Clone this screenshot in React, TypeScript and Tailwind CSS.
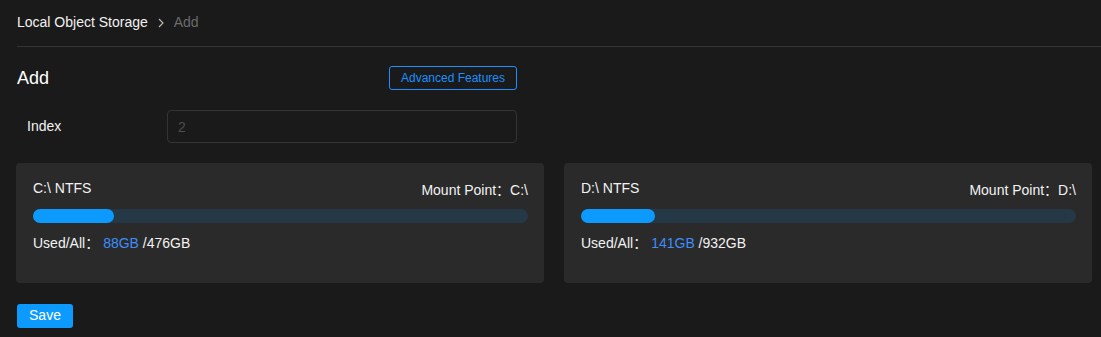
const disks = [
  { name: "C:\\ NTFS", mount: "C:\\", used: "88GB", all: "476GB", pct: 16.4 },
  { name: "D:\\ NTFS", mount: "D:\\", used: "141GB", all: "932GB", pct: 15 },
];

function DiskCard({ disk }: { disk: (typeof disks)[number] }) {
  return (
    <div className="h-[120px] rounded bg-[#2a2a2a] pl-[17px] pr-4 pt-[15px]">
      <div className="flex justify-between text-[14px] leading-5 text-[#f2f2f2]">
        <span>{disk.name}</span>
        <span className="pt-[2px]">Mount Point：{disk.mount}</span>
      </div>
      <div className="mt-[9px] h-[14px] w-full rounded-full bg-[#253846]">
        <div
          className="h-full rounded-full bg-[#0c9aff]"
          style={{ width: `${disk.pct}%` }}
        />
      </div>
      <div className="mt-[10px] text-[14px] leading-5 text-[#f2f2f2]">
        Used/All：<span className="ml-1 text-[#3d8ef8]">{disk.used}</span> /{disk.all}
      </div>
    </div>
  );
}

export default function App() {
  return (
    <div className="min-h-[337px] bg-[#1a1a1a] font-['Liberation_Sans','Noto_Sans_CJK_SC',Arial,sans-serif] text-white">
      {/* breadcrumb */}
      <div className="ml-[17px] flex h-[47px] items-center border-b border-[#333333] pb-px text-[14px]">
        <span className="text-[#f2f2f2]">Local Object Storage</span>
        <svg className="ml-[10px] mr-[10px]" width="6" height="10" viewBox="0 0 6 10">
          <path d="M1 1l4 4-4 4" fill="none" stroke="#b5b5b5" strokeWidth="1.2" />
        </svg>
        <span className="text-[#6b6b6b]">Add</span>
      </div>

      <div className="ml-[17px] mt-[19px] flex w-[500px] items-center justify-between">
        <h2 className="text-[18px] leading-6 text-white">Add</h2>
        <button className="h-[24px] w-[128px] rounded-[3px] border border-[#1a8fff] text-[12px] text-[#1a8fff]">
          Advanced Features
        </button>
      </div>

      <div className="ml-[17px] mt-5 flex w-[500px] items-center">
        <span className="w-[150px] pl-[10px] text-[14px] text-[#f2f2f2]">Index</span>
        <input
          className="h-[33px] w-[350px] rounded border border-[#333333] bg-[#1a1a1a] px-[10px] text-[14px] text-[#555] outline-none placeholder:text-[#4d4d4d]"
          placeholder="2"
        />
      </div>

      <div className="mt-5 grid grid-cols-2 gap-5 pl-4 pr-[9px]">
        {disks.map((d) => (
          <DiskCard key={d.name} disk={d} />
        ))}
      </div>

      <div className="ml-[17px] mt-5 pb-[10px]">
        <button className="h-6 w-14 rounded-[3px] bg-[#0c9aff] text-[14px] text-white">Save</button>
      </div>
    </div>
  );
}
